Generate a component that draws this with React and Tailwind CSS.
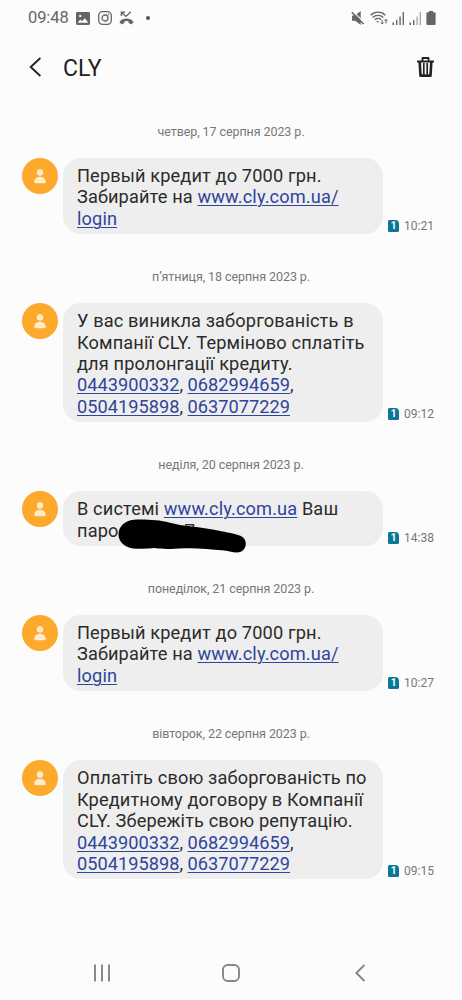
import React from "react";

const DAYS = [
  {
    date: "четвер, 17 серпня 2023 р.",
    time: "10:21",
    lines: ["Первый кредит до 7000 грн.", ["Забирайте на ", { label: "www.cly.com.ua/" }], [{ label: "login" }]],
  },
  {
    date: "п’ятниця, 18 серпня 2023 р.",
    time: "09:12",
    lines: [
      "У вас виникла заборгованість в",
      "Компанії CLY. Терміново сплатіть",
      "для пролонгації кредиту.",
      [{ label: "0443900332" }, ", ", { label: "0682994659" }, ","],
      [{ label: "0504195898" }, ", ", { label: "0637077229" }],
    ],
  },
  {
    date: "неділя, 20 серпня 2023 р.",
    time: "14:38",
    redacted: true,
    lines: [["В системі ", { label: "www.cly.com.ua" }, " Ваш"], "паро"],
  },
  {
    date: "понеділок, 21 серпня 2023 р.",
    time: "10:27",
    lines: ["Первый кредит до 7000 грн.", ["Забирайте на ", { label: "www.cly.com.ua/" }], [{ label: "login" }]],
  },
  {
    date: "вівторок, 22 серпня 2023 р.",
    time: "09:15",
    lines: [
      "Оплатіть свою заборгованість по",
      "Кредитному договору в Компанії",
      "CLY. Збережіть свою репутацію.",
      [{ label: "0443900332" }, ", ", { label: "0682994659" }, ","],
      [{ label: "0504195898" }, ", ", { label: "0637077229" }],
    ],
  },
];

function StatusBar() {
  return (
    <div className="flex h-9 items-center justify-between pl-7 pr-[26px] text-[#666666]">
      <div className="flex items-center">
        <span className="w-[41px] whitespace-nowrap text-[16.5px] leading-5 tracking-[-0.1px]">09:48</span>
        <svg className="ml-[7px] h-[13px] w-[14px]" viewBox="0 0 14 13">
          <path fillRule="evenodd" fill="currentColor" d="M1.4 0h11.2Q14 0 14 1.4v10.2q0 1.4-1.4 1.4H1.4Q0 13 0 11.6V1.4Q0 0 1.4 0ZM1.7 10.8h10.6L8.8 6.2 6 9.3 4.2 7.6ZM3.2 3v2h2V3Z" />
        </svg>
        <svg className="ml-2 h-[14px] w-[14px]" viewBox="0 0 14 14" fill="none" stroke="currentColor" strokeWidth="1.3">
          <rect x=".7" y=".7" width="12.6" height="12.6" rx="3.8" />
          <circle cx="7" cy="7" r="3" />
          <circle cx="10.6" cy="3.4" r=".5" fill="currentColor" strokeWidth=".6" />
        </svg>
        <svg className="ml-[7px] h-[14px] w-[15px]" viewBox="0 0 15 14" fill="none" stroke="currentColor">
          <path d="M2.4 5V1.2H6M2.6 1.4 7 5.4 11.8.8" strokeWidth="1.4" />
          <path fill="currentColor" stroke="none" d="M.8 10.400C4.300 6.600 10.700 6.600 14.200 10.400q.5.6 0 1.100l-1.400 1.600q-.5.4-1 .1l-1.900-1.200q-.4-.3-.4-.8V10.300Q7.500 9.700 5.500 10.300v.9q0 .5-.4.8l-1.900 1.200q-.5.3-1-.1L.8 11.500q-.5-.5 0-1.100Z" />
        </svg>
        <span className="ml-3 size-1 rounded-full bg-[#555555]" />
      </div>
      <div className="flex items-center">
        <svg className="h-[14px] w-[14px]" viewBox="0 0 14 14">
          <path fill="currentColor" d="M1 4.500h3L9.700 0v14L4.200 9.800H1Z" />
          <path d="M1.900 .2 14 12.300" stroke="#fcfcfc" strokeWidth="1.200" />
          <path d="M.8 1.200 12.600 13" stroke="currentColor" strokeWidth="1.600" />
        </svg>
        <svg className="ml-[5px] h-[14px] w-[18px]" viewBox="0 0 18 14" fill="none" stroke="currentColor" strokeWidth="1.400">
          <path d="M.7 4.200C4.500.1 11.500.1 15.300 4.200M2.700 6.600c2.900-3 7.700-3 10.600 0M4.900 8.800c1.700-1.700 4.500-1.700 6.200 0" />
          <circle cx="7.600" cy="10.700" r=".9" fill="currentColor" stroke="none" />
          <path d="M12.200 9v4M10.700 11.500l1.500 1.600 1.500-1.600M16 12.500v-4M14.500 9.900 16 8.300l1.500 1.600" strokeWidth="1" />
        </svg>
        <svg className="ml-1 h-[13px] w-[13px]" viewBox="0 0 13 13" fill="currentColor">
          <path d="M.5 10.500H2V13H.5ZM4 8h1.400v5H4ZM7.400 4.500h1.400V13H7.400ZM10.600 0H12v13h-1.400Z" />
        </svg>
        <svg className="ml-1 h-[13px] w-[13px]" viewBox="0 0 13 13" fill="currentColor">
          <path d="M.5 10.500H2V13H.5ZM4 8h1.400v5H4Z" />
          <path fill="#aaaaaa" d="M7.400 4.500h1.400V13H7.400ZM10.600 0H12v13h-1.400Z" />
        </svg>
        <svg className="ml-1 h-[14px] w-[10px]" viewBox="0 0 10 14" fill="currentColor">
          <path d="M3 0h4v1.300h1.600q1 0 1 1V13q0 1-1 1H1.400q-1 0-1-1V2.300q0-1 1-1H3Z" />
        </svg>
      </div>
    </div>
  );
}

function Header() {
  return (
    <header className="flex h-[62px] items-center pl-[29px] pr-7 text-[#222222]">
      <svg className="h-5 w-3" viewBox="0 0 12 20" fill="none" stroke="currentColor" strokeWidth="1.900">
        <path d="M11.400 1 1.700 10l9.700 9" />
      </svg>
      <h1 className="ml-[22px] grow pt-[3px] text-[23px] leading-7">CLY</h1>
      <svg className="h-5 w-[17px]" viewBox="0 0 17 20" fill="none" stroke="currentColor">
        <path d="M5.500 4V1h6v3" strokeWidth="1.800" strokeLinejoin="round" />
        <path d="M0 4.500h17" strokeWidth="2" />
        <path d="m2.700 5 .8 13.600h10L14.300 5" strokeWidth="2.600" strokeLinejoin="round" />
        <path d="M6.800 6v11.500M10.200 6v11.500" strokeWidth="1.700" />
      </svg>
    </header>
  );
}

function Avatar() {
  return (
    <div className="flex size-9 shrink-0 items-center justify-center rounded-full bg-[#fca92c]">
      <svg className="h-[15px] w-3" viewBox="0 0 12 15" fill="#fdebcc">
        <circle cx="6" cy="3.500" r="3.200" />
        <path d="M.3 12.500C.3 6 11.700 6 11.700 12.500v.8q0 .9-1 .9H1.300q-1 0-1-.9Z" />
      </svg>
    </div>
  );
}

function Line({ parts }) {
  const items = Array.isArray(parts) ? parts : [parts];
  const isPhones = /^\d/.test(items[0].label ?? "");
  return (
    <p className={isPhones ? "whitespace-pre tracking-[0.02px]" : "whitespace-pre tracking-[0.13px]"}>
      {items.map((part, i) =>
        typeof part === "string" ? (
          <span key={i}>{part}</span>
        ) : (
          <a key={i} href="#" className="text-[#2f459c] underline decoration-1 underline-offset-2">
            {part.label}
          </a>
        ),
      )}
    </p>
  );
}

function Day({ date, time, lines, redacted }) {
  return (
    <section>
      <h2 className="h-[34px] text-center text-[12.500px] leading-[15px] tracking-[-0.080px] text-[#777777]">{date}</h2>
      <div className="flex pl-[22px]">
        <Avatar />
        <div className="relative ml-[5px] w-80 shrink-0 rounded-[18px] bg-[#eeeeee] px-[14px] pb-[5px] pt-[7px] text-[18.200px] leading-[21.400px] text-[#2b2b2b]">
          {lines.map((line, i) => (
            <Line key={i} parts={line} />
          ))}
          {redacted && (
            <svg className="absolute left-[54px] top-[28px] h-[34px] w-[130px]" viewBox="0 0 130 34">
              <path d="M68 5.800h9M77 5.500l-2 5" stroke="#333333" strokeWidth="1.500" fill="none" />
              <path d="M17 .7C28 .2 43 1 52 3.500 66 7.500 83 7.500 101 11.500c8 1.700 18 3.200 23 5.500 8 4 5.500 16.500-4 16.500-5 0-9-1.700-15-2.200-11-1-25-2.500-38-2-12 .7-21 1.200-29-.2-8 .8-15 .8-22 .4C-4 27-3 2.500 17 .7Z" fill="#000000" />
            </svg>
          )}
        </div>
        <div className="mb-[2.500px] ml-[5px] flex h-3 items-center self-end text-[12px] leading-3 text-[#777777]">
          <span className="flex h-3 w-[11px] items-center justify-center rounded-[1.500px] rounded-tr-[4px] bg-[#0c7797] text-[10px] font-bold leading-3 text-white">
            1
          </span>
          <span className="ml-[5px]">{time}</span>
        </div>
      </div>
    </section>
  );
}

function NavBar() {
  return (
    <nav className="flex h-[54px] items-center pl-[93px] text-[#858585]">
      <svg className="h-[18px] w-[18px]" viewBox="0 0 18 18" stroke="currentColor" strokeWidth="1.900">
        <path d="M2 .5v17M9 .5v17M16 .5v17" />
      </svg>
      <svg className="ml-[111px] h-[18px] w-[18px]" viewBox="0 0 18 18" fill="none" stroke="currentColor" strokeWidth="1.900">
        <rect x="1" y="1" width="16" height="16" rx="4.800" />
      </svg>
      <svg className="ml-[115px] h-[18px] w-[10px]" viewBox="0 0 10 18" fill="none" stroke="currentColor" strokeWidth="1.900">
        <path d="M9.400 1 1.400 9l8 8" />
      </svg>
    </nav>
  );
}

export default function App() {
  return (
    <div className="flex h-[1000px] w-[462px] flex-col overflow-hidden bg-[#fcfcfc] font-['Roboto','Noto_Sans',sans-serif]">
      <StatusBar />
      <Header />
      <main className="flex grow flex-col gap-[35px] pt-[26px]">
        {DAYS.map((day) => (
          <Day key={day.date} {...day} />
        ))}
      </main>
      <NavBar />
    </div>
  );
}
